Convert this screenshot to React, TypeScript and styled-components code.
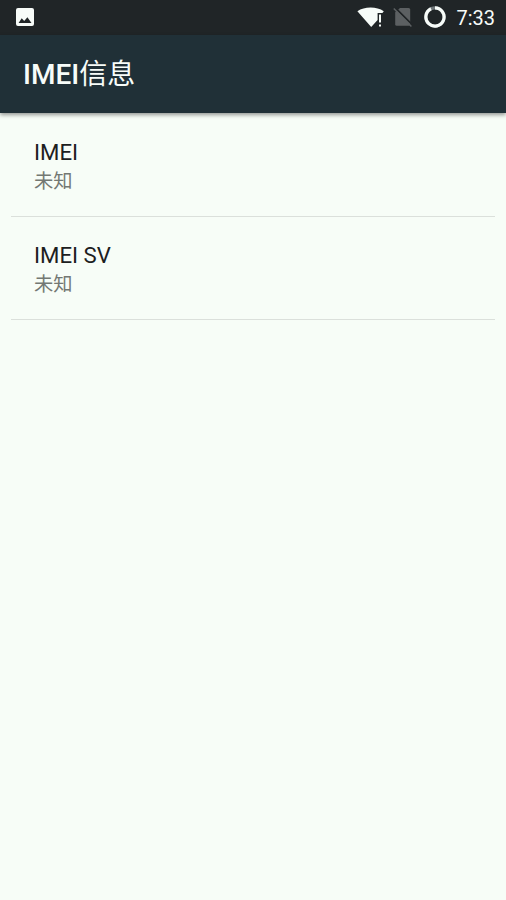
import React, { FC } from "react";
import styled, { createGlobalStyle } from "styled-components";

interface PreferenceProps {
  title: string;
  summary: string;
}

const preferences: PreferenceProps[] = [
  { title: "IMEI", summary: "未知" },
  { title: "IMEI SV", summary: "未知" },
];

const ImageIcon: FC = () => (
  <svg width="18" height="18" viewBox="0 0 18 18">
    <path
      fill="#f7fcf9"
      fillRule="evenodd"
      d="M2 0h14a2 2 0 0 1 2 2v14a2 2 0 0 1-2 2H2a2 2 0 0 1-2-2V2a2 2 0 0 1 2-2zM5.7 10.2L2.6 15h12.9l-4.1-5.8-3.2 3.9z"
    />
  </svg>
);

const WifiIcon: FC = () => (
  <svg width="28" height="22" viewBox="0 0 28 22">
    <path
      fill="#f7fcf9"
      d="M0.4 5.2C4 2.6 8.6 1.4 13.6 1.4s9.6 1.2 13.2 3.8L25.4 7H20.6v7L14.2 21z"
    />
    <path fill="#f7fcf9" d="M22 8.6h2v8h-2zM22 18.4h2v2h-2z" />
  </svg>
);

const NoSimIcon: FC = () => (
  <svg width="20" height="20" viewBox="0 0 20 20">
    <path
      fill="#5c6062"
      d="M7 1H15.6a1.6 1.6 0 0 1 1.6 1.6v14.6a1.6 1.6 0 0 1-1.6 1.6H3.8a1.6 1.6 0 0 1-1.6-1.6V5.2z"
    />
    <path stroke="#202527" strokeWidth="1.8" d="M2.4 1L20 18.4" />
    <path stroke="#5c6062" strokeWidth="1.5" d="M0.8 1.4L18.4 19.4" />
  </svg>
);

const BatteryIcon: FC = () => (
  <svg width="22" height="22" viewBox="0 0 22 22" fill="none">
    <circle cx="11" cy="11" r="9.1" stroke="#70777a" strokeWidth="3.2" />
    <path
      stroke="#f7fcf9"
      strokeWidth="3.2"
      d="M11 1.9a9.1 9.1 0 1 1-4 0.9"
    />
  </svg>
);

const Preference: FC<PreferenceProps> = ({ title, summary }) => (
  <Item>
    <ItemTitle>{title}</ItemTitle>
    <ItemSummary>{summary}</ItemSummary>
  </Item>
);

const App: FC = () => {
  return (
    <Root>
      <GlobalStyle />
      <StatusBar>
        <ImageIcon />
        <StatusIcons>
          <WifiIcon />
          <NoSimIcon />
          <BatteryIcon />
          <Clock>7:33</Clock>
        </StatusIcons>
      </StatusBar>
      <Header>
        <Title>
          IMEI<TitleRegular>信息</TitleRegular>
        </Title>
      </Header>
      <List>
        {preferences.map((item) => (
          <Preference key={item.title} {...item} />
        ))}
      </List>
    </Root>
  );
};

export default App;

const GlobalStyle = createGlobalStyle`
  * {
    box-sizing: border-box;
    margin: 0;
    padding: 0;
  }

  body {
    background-color: #f7fdf7;
    font-family: Roboto, "Noto Sans CJK SC", sans-serif;
  }
`;

const Root = styled.div`
  display: flex;
  flex-direction: column;
  min-height: 900px;
`;

const StatusBar = styled.div`
  height: 35px;
  padding: 0 11px 1px 16px;
  display: flex;
  align-items: center;
  justify-content: space-between;
  background-color: #202527;

  svg {
    display: block;
  }
`;

const StatusIcons = styled.div`
  display: flex;
  align-items: center;

  svg:nth-of-type(2) {
    margin-left: 8px;
  }

  svg:nth-of-type(3) {
    margin-left: 11px;
  }
`;

const Clock = styled.span`
  margin-left: 10px;
  padding-top: 2px;
  font-size: 20px;
  line-height: 24px;
  color: #f7fcf9;
`;

const Header = styled.header`
  height: 78px;
  padding: 2px 23px 0;
  display: flex;
  align-items: center;
  background-color: #203037;
  box-shadow: 0 2px 4px rgba(0, 0, 0, 0.4);
`;

const Title = styled.h1`
  font-weight: 500;
  font-size: 28px;
  line-height: 40px;
  color: #f7fcf9;
`;

const TitleRegular = styled.span`
  font-weight: 400;
`;

const List = styled.ul`
  padding: 1px 11px 0;
  list-style: none;
`;

const Item = styled.li`
  height: 103px;
  padding: 24px 23px 0;
  border-bottom: 1px solid #dbe0db;
`;

const ItemTitle = styled.p`
  font-size: 22.2px;
  line-height: 28px;
  color: #1c201e;
`;

const ItemSummary = styled.p`
  padding-top: 1px;
  font-size: 19.3px;
  line-height: 29px;
  color: #737873;
`;
